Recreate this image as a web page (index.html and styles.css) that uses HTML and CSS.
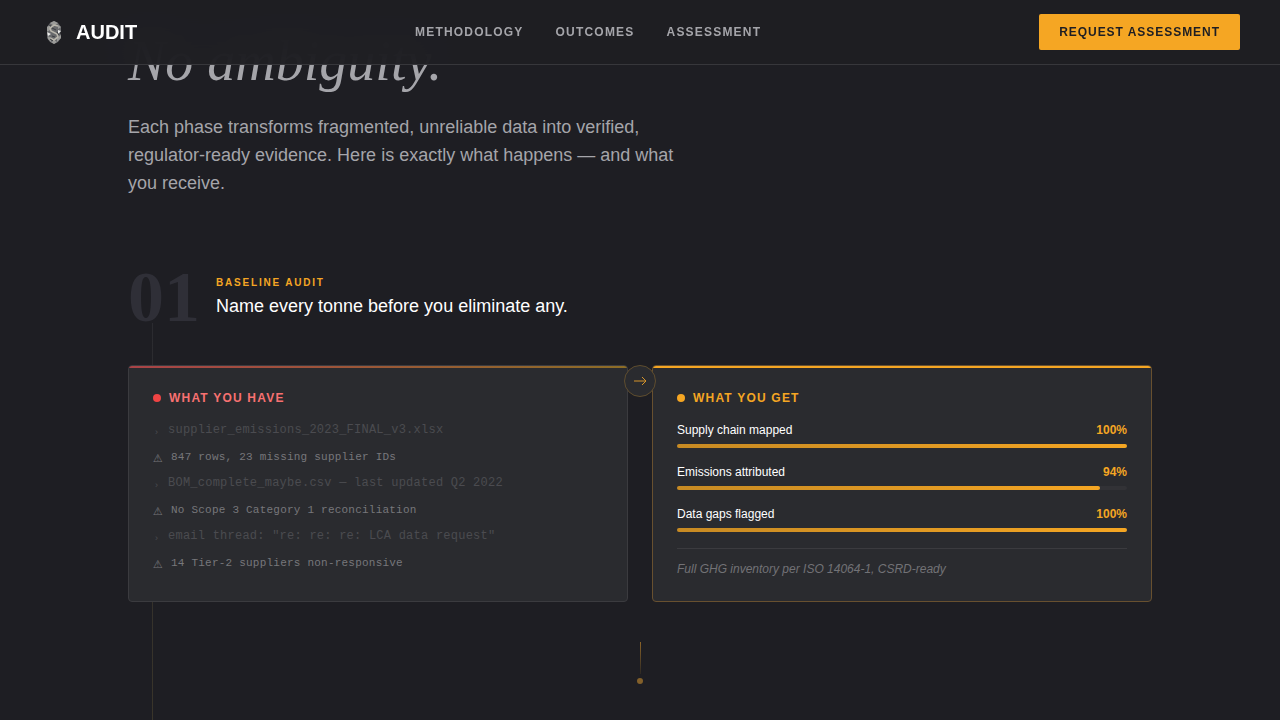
FILE: index.html
```html
<!DOCTYPE html>
<html lang="en">
<head>
  <meta charset="UTF-8" />
  <meta name="viewport" content="width=device-width, initial-scale=1" />
  <title>Audit</title>
  <link rel="stylesheet" href="styles.css">
</head>
<body>

  <header class="site-header">
    <a class="brand" href="#">
      <svg class="brand-mark" viewBox="0 0 28 28" aria-hidden="true">
        <path d="M14 3l4 2 3 4v4l-1 2 1 2v3l-3 4-4 2-4-2-3-4v-4l1-2-1-2V9l3-4z" fill="#68696c"/>
        <path d="M14 3l4 2-4 3-4-3zM7 9l3-2v5l-3 2zM18 7l3 2-3 2zM8 18l3 2v4l-3-3zM17 20l4-3v3l-4 4zM14 22l3 2-3 2-3-2z" fill="#9b9b99"/>
        <path d="M18 8l-4-1-4 3 1 3 6 3 1 3-4 3-4-2" fill="none" stroke="#b9b6ac" stroke-width="1.6"/>
        <path d="M7 14l4 2-3 2zM18 12l3 1-3 3z" fill="#ececea"/>
        <path d="M12 10l4 2M12 18l3 1M9 7l2 1M17 14l2 3M10 21l3 2" fill="none" stroke="#3c3e42"/>
      </svg>
      AUDIT
    </a>
    <nav class="site-nav">
      <a href="#methodology">Methodology</a>
      <a href="#outcomes">Outcomes</a>
      <a href="#assessment">Assessment</a>
    </nav>
    <button class="cta" type="button">Request Assessment</button>
  </header>

  <main class="page" id="methodology">
    <section class="intro">
      <h1>No ambiguity.</h1>
      <p>Each phase transforms fragmented, unreliable data into verified, regulator-ready evidence. Here is exactly what happens — and what you receive.</p>
    </section>

    <section class="timeline">
      <div class="phase-head">
        <div class="phase-number">01</div>
        <div>
          <div class="phase-label">Baseline Audit</div>
          <h2>Name every tonne before you eliminate any.</h2>
        </div>
      </div>

      <div class="cards">
        <article class="card card-have">
          <h3>What you have</h3>
          <ul class="files">
            <li class="file">supplier_emissions_2023_FINAL_v3.xlsx</li>
            <li class="warn">847 rows, 23 missing supplier IDs</li>
            <li class="file">BOM_complete_maybe.csv — last updated Q2 2022</li>
            <li class="warn">No Scope 3 Category 1 reconciliation</li>
            <li class="file">email thread: "re: re: re: LCA data request"</li>
            <li class="warn">14 Tier-2 suppliers non-responsive</li>
          </ul>
        </article>

        <div class="arrow">
          <svg viewBox="0 0 14 14" aria-hidden="true"><path d="M1 7h12M9 3l4 4-4 4"/></svg>
        </div>

        <article class="card card-get">
          <h3>What you get</h3>
          <div class="metrics">
            <div class="metric">
              <span>Supply chain mapped</span><strong>100%</strong>
              <div class="track"><div class="fill" style="width: 100%"></div></div>
            </div>
            <div class="metric">
              <span>Emissions attributed</span><strong>94%</strong>
              <div class="track"><div class="fill" style="width: 94%"></div></div>
            </div>
            <div class="metric">
              <span>Data gaps flagged</span><strong>100%</strong>
              <div class="track"><div class="fill" style="width: 100%"></div></div>
            </div>
          </div>
          <p class="note">Full GHG inventory per ISO 14064-1, CSRD-ready</p>
        </article>
      </div>

      <div class="connector"></div>
    </section>
  </main>

</body>
</html>
```
FILE: styles.css
```css
* {
  box-sizing: border-box;
}
body {
  display: flex;
  flex-direction: column;
  min-height: 100vh;
  margin: 0;
  background: #1e1e23;
  color: #fff;
  font-family: "Liberation Sans", Arial, sans-serif;
}
h1, h2, h3, p, ul {
  margin: 0;
  padding: 0;
  font-weight: normal;
}
a {
  color: inherit;
  text-decoration: none;
}

/* header */
.site-header {
  position: sticky;
  top: 0;
  z-index: 10;
  display: flex;
  align-items: center;
  justify-content: space-between;
  height: 65px;
  padding: 0 40px;
  background: rgba(31, 31, 35, 0.95);
  backdrop-filter: blur(20px);
  border-bottom: 1px solid #37373b;
}
.brand {
  display: flex;
  align-items: center;
  gap: 8px;
  font-size: 20px;
  font-weight: bold;
}
.brand-mark {
  width: 28px;
  height: 28px;
}
.site-nav {
  display: flex;
  gap: 32px;
  color: #a5a5aa;
  font-size: 12px;
  font-weight: bold;
  letter-spacing: 0.1em;
  text-transform: uppercase;
}
.cta {
  height: 36px;
  padding: 0 20px;
  border: 0;
  border-radius: 2px;
  background: #f5a623;
  color: #1e1e23;
  font: bold 12px "Liberation Sans", Arial, sans-serif;
  letter-spacing: 0.08em;
  text-transform: uppercase;
}

/* intro */
.page {
  display: flex;
  flex: 1;
  flex-direction: column;
  width: 100%;
  max-width: 1024px;
  margin: -32px auto 0;
}
h1 {
  color: #a5a5aa;
  font: italic 56px/56px "Liberation Serif", serif;
}
.intro p {
  max-width: 576px;
  margin-top: 24px;
  color: #a5a5aa;
  font-size: 18px;
  line-height: 28px;
}

/* timeline */
.timeline {
  position: relative;
  flex: 1;
  margin-top: 64px;
}
.timeline::before {
  content: "";
  position: absolute;
  top: 62px;
  bottom: 0;
  left: 24px;
  width: 1px;
  background: linear-gradient(#2b2b30, #3a352a);
}
.phase-head {
  position: relative;
  display: flex;
  align-items: center;
  gap: 16px;
}
.phase-number {
  color: #2f2f37;
  font: bold 72px/72px "Liberation Serif", serif;
}
.phase-label {
  color: #f5a623;
  font-size: 10px;
  font-weight: bold;
  line-height: 16px;
  letter-spacing: 0.18em;
  text-transform: uppercase;
}
h2 {
  margin: 3px 0 1px;
  font-size: 18px;
  line-height: 24px;
}
.cards {
  position: relative;
  display: grid;
  grid-template-columns: 1fr 1fr;
  gap: 24px;
  margin-top: 32px;
}
.card {
  position: relative;
  padding: 24px;
  border: 1px solid #3b3b3f;
  border-radius: 4px;
  overflow: hidden;
  background: #2a2b2f;
}
.card::before {
  content: "";
  position: absolute;
  top: 0;
  left: 0;
  right: 0;
  height: 2px;
  background: linear-gradient(90deg, #a94347, #8c6d26);
}
.card-get {
  border-color: #68502f;
}
.card-get::before {
  background: #f5a623;
}
h3 {
  display: flex;
  align-items: center;
  gap: 8px;
  margin-bottom: 16px;
  color: #f87171;
  font-size: 12px;
  font-weight: bold;
  line-height: 16px;
  letter-spacing: 0.1em;
  text-transform: uppercase;
}
h3::before {
  content: "";
  width: 8px;
  height: 8px;
  border-radius: 50%;
  background: #ef4444;
}
.card-get h3 {
  color: #f5a623;
}
.card-get h3::before {
  background: #f5a623;
}
.arrow {
  position: absolute;
  top: 0;
  left: calc(50% - 16px);
  z-index: 1;
  display: flex;
  align-items: center;
  justify-content: center;
  width: 32px;
  height: 32px;
  border: 1px solid #5f4d2e;
  border-radius: 50%;
  background: #2a2b2f;
}
.arrow svg {
  width: 14px;
  height: 14px;
  fill: none;
  stroke: #d5942a;
}

/* source files */
.files {
  display: flex;
  flex-direction: column;
  gap: 7px;
  list-style: none;
  font-family: "Liberation Mono", monospace;
}
.file, .warn {
  display: flex;
  gap: 8px;
  letter-spacing: 0.02em;
}
.file {
  color: #4b4b50;
  font-size: 12px;
  line-height: 16px;
}
.file::before {
  content: "›";
  width: 7px;
  height: 16px;
  font-size: 9px;
  line-height: 22px;
  text-align: center;
}
.warn {
  padding-top: 2px;
  color: #77777b;
  font-size: 11px;
  line-height: 21px;
}
.warn::before {
  content: "⚠";
  width: 10px;
  height: 21px;
  font-family: "DejaVu Sans", sans-serif;
  line-height: 23px;
}

/* metrics */
.metrics {
  display: grid;
  gap: 16px;
}
.metric {
  display: grid;
  grid-template-columns: 1fr auto;
  row-gap: 6px;
  font-size: 12px;
  line-height: 16px;
}
.metric strong {
  color: #f5a623;
}
.track {
  grid-column: 1 / -1;
  height: 4px;
  border-radius: 2px;
  background: #323236;
}
.fill {
  height: 100%;
  border-radius: 2px;
  background: linear-gradient(90deg, #c78a23, #f5a623);
}
.note {
  margin-top: 16px;
  padding-top: 12px;
  border-top: 1px solid #3b3b3f;
  color: #727276;
  font-size: 12px;
  font-style: italic;
  line-height: 16px;
}
.connector {
  display: flex;
  flex-direction: column;
  align-items: center;
  gap: 4px;
  margin-top: 40px;
}
.connector::before {
  content: "";
  width: 1px;
  height: 32px;
  background: linear-gradient(#8c6428, #2d2924);
}
.connector::after {
  content: "";
  width: 6px;
  height: 6px;
  border-radius: 50%;
  background: #83602a;
}
```
